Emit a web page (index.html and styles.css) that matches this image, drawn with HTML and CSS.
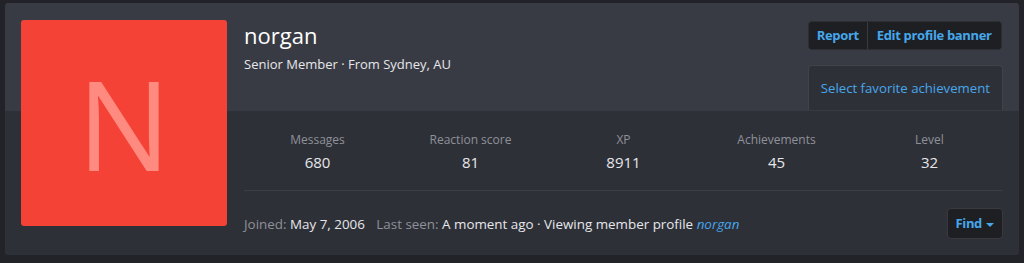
FILE: index.html
```html
<!DOCTYPE html>
<html lang="en">
<head>
    <meta charset="UTF-8">
    <title>norgan</title>
    <link rel="stylesheet" href="styles.css">
</head>
<body>
    <!-- Carte du profil -->
    <div class="profile">
        <div class="avatar">N</div>

        <div class="main">
            <!-- En-tête avec la bannière -->
            <div class="header">
                <div class="ident">
                    <h1 class="username">norgan</h1>
                    <div class="blurb">Senior Member · From Sydney, AU</div>
                </div>
                <div class="actions">
                    <div class="btn-group">
                        <a class="btn" href="#">Report</a>
                        <a class="btn" href="#">Edit profile banner</a>
                    </div>
                    <a class="fav" href="#">Select favorite achievement</a>
                </div>
            </div>

            <!-- Statistiques -->
            <div class="stats">
                <div class="stat"><span class="label">Messages</span><span class="value">680</span></div>
                <div class="stat"><span class="label">Reaction score</span><span class="value">81</span></div>
                <div class="stat"><span class="label">XP</span><span class="value">8911</span></div>
                <div class="stat"><span class="label">Achievements</span><span class="value">45</span></div>
                <div class="stat"><span class="label">Level</span><span class="value">32</span></div>
            </div>
            <div class="divider"></div>

            <div class="footer">
                <div class="seen">
                    <span class="muted">Joined:</span> May 7, 2006
                    <span class="muted gap">Last seen:</span> A moment ago · Viewing member profile <a href="#" class="user-link">norgan</a>
                </div>
                <a class="btn find" href="#">Find <span class="caret"></span></a>
            </div>
        </div>
    </div>
</body>
</html>
```

FILE: styles.css
```css
body {
    font-family: "Open Sans", "Noto Sans", sans-serif;
    background-color: #222328;
    margin: 0;
    padding: 3px 5px;
    color: #e6e7ea;
}
a {
    text-decoration: none;
    color: #47a7eb;
}
.profile {
    display: flex;
    gap: 17px;
    padding: 17px 16px 16px 16px;
    border-radius: 3px;
    background: linear-gradient(#393b44 0, #393b44 108px, #2e3038 108px);
}
.avatar {
    width: 206px;
    height: 206px;
    flex-shrink: 0;
    border-radius: 3px;
    background-color: #f44336;
    color: #ff8a80;
    font-family: "Open Sans", sans-serif;
    font-size: 124px;
    line-height: 206px;
    text-align: center;
}
.main {
    flex: 1;
    display: flex;
    flex-direction: column;
}
.header {
    display: flex;
    justify-content: space-between;
    height: 91px;
}
.username {
    margin: 0;
    font-size: 22px;
    font-weight: normal;
    line-height: 30px;
    color: #fff;
}
.blurb {
    font-size: 13px;
    margin-top: 5px;
}
.actions {
    display: flex;
    flex-direction: column;
    align-items: flex-start;
    gap: 15px;
    padding-top: 1px;
}
.btn-group {
    display: flex;
    border: 1px solid #2c2e33;
    border-radius: 4px;
    background-color: #1d1f23;
}
.btn {
    display: inline-block;
    font-size: 13px;
    font-weight: bold;
    letter-spacing: -0.35px;
    line-height: 27px;
    padding: 0 8px;
    background-color: #1d1f23;
    border-radius: 4px;
}
.btn-group .btn + .btn {
    border-left: 1px solid #393b40;
    border-radius: 0 4px 4px 0;
    padding: 0 9px;
}
.fav {
    display: block;
    font-size: 13.2px;
    line-height: 44px;
    padding: 0 12px;
    border: 1px solid #41434b;
    border-bottom: none;
    border-radius: 4px 4px 0 0;
    background-color: #2e3038;
}
.stats {
    display: flex;
    margin: 0 -3px;
    padding: 20px 0 17px;
}
.stat {
    flex: 1;
    display: flex;
    flex-direction: column;
    align-items: center;
}
.label {
    font-size: 12px;
    color: #8e9199;
    line-height: 17px;
}
.value {
    font-size: 15px;
    line-height: 22px;
    margin-top: 3px;
}
.divider {
    border-bottom: 1px solid #3c3e46;
}
.footer {
    display: flex;
    justify-content: space-between;
    align-items: center;
    padding-top: 17px;
}
.seen {
    font-size: 13.4px;
}
.muted {
    color: #8e9199;
}
.gap {
    margin-left: 8px;
}
.user-link {
    font-style: italic;
}
.find {
    border: 1px solid #383a40;
    line-height: 29px;
    padding: 0 8px;
}
.caret {
    display: inline-block;
    margin-left: 1px;
    vertical-align: middle;
    border-top: 4px solid #47a7eb;
    border-left: 4px solid transparent;
    border-right: 4px solid transparent;
}
```
